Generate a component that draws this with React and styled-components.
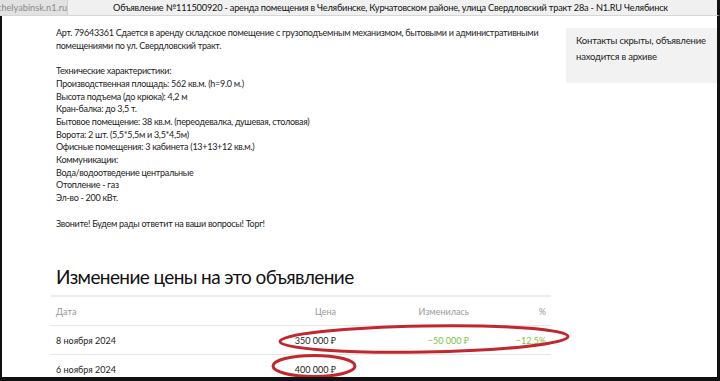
import styled, { createGlobalStyle } from "styled-components";

const GlobalStyle = createGlobalStyle`
  html, body {
    margin: 0;
    padding: 0;
    background: #fff;
  }
  body {
    width: 720px;
    height: 381px;
    overflow: hidden;
    font-family: Lato, "Noto Sans", sans-serif;
  }
`;

const Window = styled.div`
  width: 720px;
  height: 381px;
  display: flex;
  flex-direction: column;
  box-sizing: border-box;
`;

const TitleBar = styled.div`
  height: 15px;
  display: flex;
  align-items: center;
  background: #f0f0f0;
  border-bottom: 1px solid #d6d6d6;
  border-right: 3px solid #111;
`;

const Url = styled.div`
  width: 67px;
  flex-shrink: 0;
  height: 15px;
  line-height: 15px;
  background: #e2e2e2;
  border-right: 1px solid #cfcfcf;
  color: #8a8a8a;
  font-size: 9.2px;
  white-space: nowrap;
  overflow: hidden;
  text-indent: -3px;
`;

const Title = styled.div`
  flex: 1;
  text-align: center;
  font-size: 9.2px;
  letter-spacing: -0.2px;
  color: #111;
  white-space: nowrap;
  overflow: hidden;
  padding-right: 4px;
`;

const Frame = styled.div`
  flex: 1;
  display: flex;
  border-left: 2px solid #111;
  border-right: 3px solid #111;
  border-bottom: 4px solid #111;
  overflow: hidden;
  position: relative;
`;

const Main = styled.div`
  width: 500px;
  padding: 11px 0 0 49px;
  flex-shrink: 0;
`;

const Description = styled.div`
  padding-left: 5px;
  font-size: 9px;
  letter-spacing: -0.28px;
  line-height: 12.7px;
  color: #222;
  white-space: pre;
`;

const Aside = styled.div`
  margin-left: 15px;
  margin-top: 12px;
  flex: 1;
  align-self: flex-start;
  background: #f2f2f2;
  padding: 5px 6px 18px 10px;
  font-size: 9.5px;
  letter-spacing: -0.2px;
  line-height: 16px;
  color: #222;
`;

const Heading = styled.h2`
  margin: 35px 0 0 5px;
  font-size: 19px;
  letter-spacing: -0.6px;
  line-height: 24px;
  font-weight: 400;
  color: #111;
`;

const Table = styled.div`
  margin-top: 6px;
  border-top: 2px solid #ededed;
`;

const Row = styled.div`
  display: grid;
  grid-template-columns: 1fr 110px 133px 77px;
  height: 28px;
  align-items: center;
  border-bottom: 1px solid #e6e6e6;
  font-size: 9px;
  color: ${p => (p.$head ? "#999" : "#222")};
`;

const Cell = styled.div`
  padding: 0 5px;
  text-align: ${p => (p.$right ? "right" : "left")};
  color: ${p => (p.$green ? "#7cc242" : "inherit")};
  white-space: nowrap;
`;

const Marks = styled.svg`
  position: absolute;
  left: 0;
  top: 0;
  pointer-events: none;
`;

const description = `Арт. 79643361 Сдается в аренду складское помещение с грузоподъемным механизмом, бытовыми и административными
помещениями по ул. Свердловский тракт.

Технические характеристики:
Производственная площадь: 562 кв.м. (h=9.0 м.)
Высота подъема (до крюка): 4,2 м
Кран-балка: до 3,5 т.
Бытовое помещение: 38 кв.м. (переодевалка, душевая, столовая)
Ворота: 2 шт. (5,5*5,5м и 3,5*4,5м)
Офисные помещения: 3 кабинета (13+13+12 кв.м.)
Коммуникации:
Вода/водоотведение центральные
Отопление - газ
Эл-во - 200 кВт.

Звоните! Будем рады ответит на ваши вопросы! Торг!`;

const rows = [
  { date: "8 ноября 2024", price: "350 000 ₽", diff: "−50 000 ₽", pct: "−12,5%" },
  { date: "6 ноября 2024", price: "400 000 ₽", diff: "", pct: "" },
];

export default function App() {
  return (
    <>
      <GlobalStyle />
      <Window>
        <TitleBar>
          <Url>chelyabinsk.n1.ru</Url>
          <Title>
            Объявление №111500920 - аренда помещения в Челябинске, Курчатовском районе, улица Свердловский тракт 28а - N1.RU Челябинск
          </Title>
        </TitleBar>
        <Frame>
          <Main>
            <Description>{description}</Description>
            <Heading>Изменение цены на это объявление</Heading>
            <Table>
              <Row $head>
                <Cell>Дата</Cell>
                <Cell $right>Цена</Cell>
                <Cell $right>Изменилась</Cell>
                <Cell $right>%</Cell>
              </Row>
              {rows.map(r => (
                <Row key={r.date}>
                  <Cell>{r.date}</Cell>
                  <Cell $right>{r.price}</Cell>
                  <Cell $right $green>{r.diff}</Cell>
                  <Cell $right $green>{r.pct}</Cell>
                </Row>
              ))}
            </Table>
          </Main>
          <Aside>Контакты скрыты, объявление находится в архиве</Aside>
          <Marks width="715" height="362" viewBox="0 0 715 362">
            <ellipse cx="422" cy="323" rx="144" ry="13" fill="none" stroke="#c1272d" strokeWidth="3" transform="rotate(-1 422 323)" />
            <ellipse cx="312" cy="350" rx="41" ry="10.5" fill="none" stroke="#c1272d" strokeWidth="3" />
          </Marks>
        </Frame>
      </Window>
    </>
  );
}
